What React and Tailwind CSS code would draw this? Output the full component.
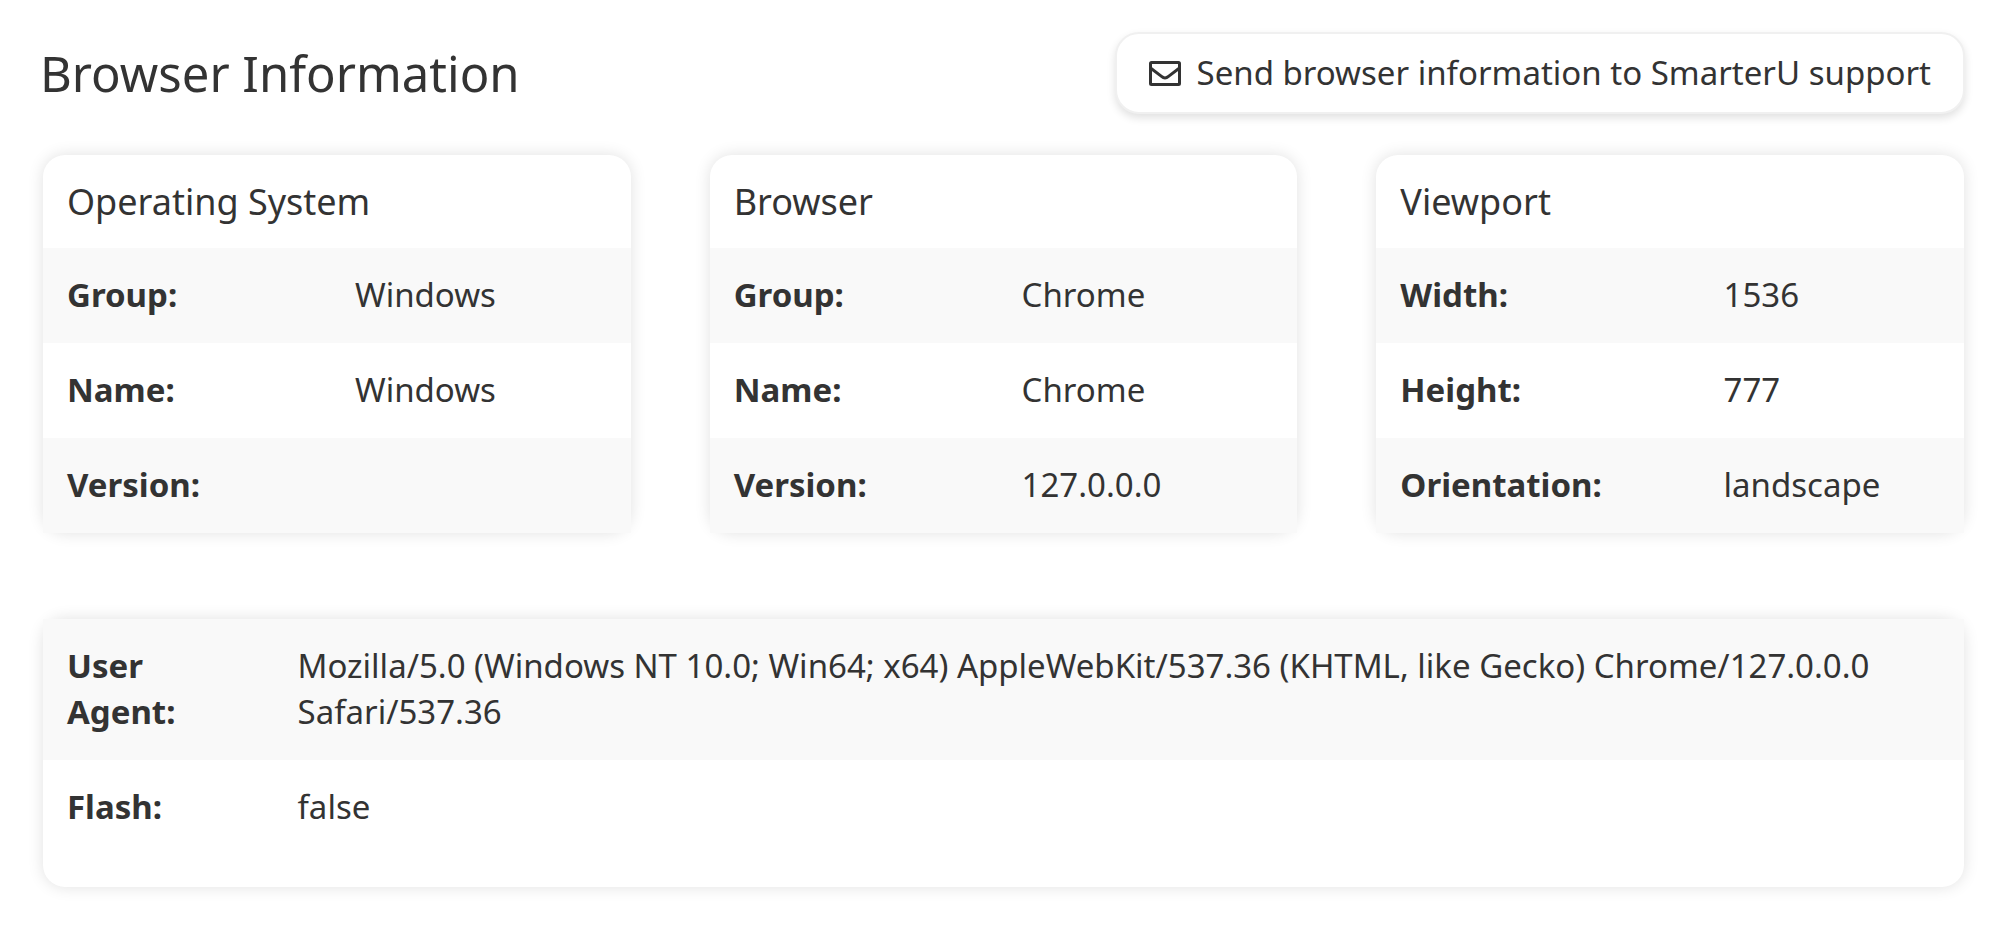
import React from "react";

const cards = [
  {
    title: "Operating System",
    labelWidth: "w-[49%]",
    rows: [
      ["Group:", "Windows"],
      ["Name:", "Windows"],
      ["Version:", ""],
    ],
  },
  {
    title: "Browser",
    labelWidth: "w-[49%]",
    rows: [
      ["Group:", "Chrome"],
      ["Name:", "Chrome"],
      ["Version:", "127.0.0.0"],
    ],
  },
  {
    title: "Viewport",
    labelWidth: "w-[55%]",
    rows: [
      ["Width:", "1536"],
      ["Height:", "777"],
      ["Orientation:", "landscape"],
    ],
  },
];

const agentRows = [
  [
    "User Agent:",
    "Mozilla/5.0 (Windows NT 10.0; Win64; x64) AppleWebKit/537.36 (KHTML, like Gecko) Chrome/127.0.0.0 Safari/537.36",
  ],
  ["Flash:", "false"],
];

function EnvelopeIcon() {
  return (
    <svg
      viewBox="0 0 32 25"
      className="h-[25px] w-8 shrink-0"
      fill="none"
      stroke="currentColor"
      strokeWidth="3"
      strokeLinejoin="round"
      aria-hidden="true"
    >
      <rect x="1.5" y="1.5" width="29" height="22" rx="1" />
      <path d="M1.5 7 12.5 15.4Q16 18.6 19.5 15.4L30.5 7" />
    </svg>
  );
}

function InfoTable({ rows, labelWidth }) {
  return (
    <table className="w-full table-fixed text-left text-[33px] leading-[46px]">
      <tbody>
        {rows.map(([label, value]) => (
          <tr key={label} className="align-top odd:bg-[#f9f9f9]">
            <th
              scope="row"
              className={`${labelWidth} px-6 pt-6 pb-[25px] font-bold`}
            >
              {label}
            </th>
            <td className="px-6 pt-6 pb-[25px]">{value}</td>
          </tr>
        ))}
      </tbody>
    </table>
  );
}

function Card({ title, rows, labelWidth }) {
  return (
    <section className="rounded-[22px] bg-white shadow-[0_0_16px_rgba(0,0,0,0.12)]">
      <h2 className="px-6 py-6 text-[36px] leading-[45px]">{title}</h2>
      <InfoTable rows={rows} labelWidth={labelWidth} />
    </section>
  );
}

export default function App() {
  return (
    <main className="bg-white px-10 pt-8 pb-9 font-['Noto_Sans',sans-serif] text-[#333]">
      {/* Page header */}
      <header className="flex items-center justify-between">
        <h1 className="text-[49px] leading-[60px]">Browser Information</h1>
        <button
          type="button"
          className="flex items-center gap-4 rounded-[24px] border-2 border-[#f0f0f0] bg-white px-8 py-4 text-[33px] leading-[46px] shadow-[0_4px_8px_rgba(0,0,0,0.12)]"
        >
          <EnvelopeIcon />
          Send browser information to SmarterU support
        </button>
      </header>

      <div className="mt-[41px] flex flex-col gap-[86px] pr-px pl-[3px]">
        {/* Summary cards */}
        <div className="grid grid-cols-3 gap-[79px]">
          {cards.map((card) => (
            <Card key={card.title} {...card} />
          ))}
        </div>

        {/* User agent */}
        <section className="rounded-[22px] bg-white pb-8 shadow-[0_0_16px_rgba(0,0,0,0.12)]">
          <InfoTable rows={agentRows} labelWidth="w-[12%]" />
        </section>
      </div>
    </main>
  );
}
